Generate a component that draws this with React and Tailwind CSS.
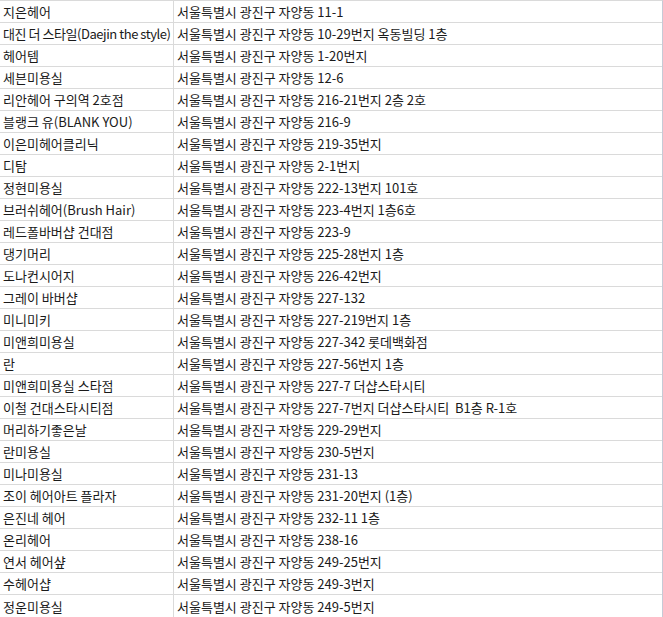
const rows = [
  ['지은헤어', '서울특별시 광진구 자양동 11-1'],
  ['대진 더 스타일(Daejin the style)', '서울특별시 광진구 자양동 10-29번지 옥동빌딩 1층'],
  ['헤어템', '서울특별시 광진구 자양동 1-20번지'],
  ['세븐미용실', '서울특별시 광진구 자양동 12-6'],
  ['리안헤어 구의역 2호점', '서울특별시 광진구 자양동 216-21번지 2층 2호'],
  ['블랭크 유(BLANK YOU)', '서울특별시 광진구 자양동 216-9'],
  ['이은미헤어클리닉', '서울특별시 광진구 자양동 219-35번지'],
  ['디탐', '서울특별시 광진구 자양동 2-1번지'],
  ['정현미용실', '서울특별시 광진구 자양동 222-13번지 101호'],
  ['브러쉬헤어(Brush Hair)', '서울특별시 광진구 자양동 223-4번지 1층6호'],
  ['레드폴바버샵 건대점', '서울특별시 광진구 자양동 223-9'],
  ['댕기머리', '서울특별시 광진구 자양동 225-28번지 1층'],
  ['도나컨시어지', '서울특별시 광진구 자양동 226-42번지'],
  ['그레이 바버샵', '서울특별시 광진구 자양동 227-132'],
  ['미니미키', '서울특별시 광진구 자양동 227-219번지 1층'],
  ['미앤희미용실', '서울특별시 광진구 자양동 227-342 롯데백화점'],
  ['란', '서울특별시 광진구 자양동 227-56번지 1층'],
  ['미앤희미용실 스타점', '서울특별시 광진구 자양동 227-7 더샵스타시티'],
  ['이철 건대스타시티점', '서울특별시 광진구 자양동 227-7번지 더샵스타시티  B1층 R-1호'],
  ['머리하기좋은날', '서울특별시 광진구 자양동 229-29번지'],
  ['란미용실', '서울특별시 광진구 자양동 230-5번지'],
  ['미나미용실', '서울특별시 광진구 자양동 231-13'],
  ['조이 헤어아트 플라자', '서울특별시 광진구 자양동 231-20번지 (1층)'],
  ['은진네 헤어', '서울특별시 광진구 자양동 232-11 1층'],
  ['온리헤어', '서울특별시 광진구 자양동 238-16'],
  ['연서 헤어샾', '서울특별시 광진구 자양동 249-25번지'],
  ['수헤어샵', '서울특별시 광진구 자양동 249-3번지'],
  ['정운미용실', '서울특별시 광진구 자양동 249-5번지'],
];

export default function App() {
  return (
    <div
      className="w-[663px] h-[617px] bg-white text-[13px] text-[#1a1a1a] overflow-hidden"
      style={{ fontFamily: '"Noto Sans CJK KR", "Noto Sans", sans-serif' }}
    >
      <div className="w-[663px] border-t border-t-[#dadada] border-r border-r-[#c6cad6] border-b border-b-[#c6cad6]">
        {rows.map(([name, addr], i) => (
          <div
            key={i}
            className={`flex h-[22px] ${i < rows.length - 1 ? 'border-b border-b-[#dadada]' : ''}`}
          >
            <div
              className={`w-[174px] shrink-0 border-r border-r-[#dadada] pl-[3px] flex items-center whitespace-nowrap overflow-hidden leading-none ${
                i === 1 ? 'tracking-[-0.45px] pl-[2px]' : ''
              }`}
            >
              {name}
            </div>
            <div className="flex-1 pl-[3px] flex items-center whitespace-pre leading-none">
              {addr}
            </div>
          </div>
        ))}
      </div>
    </div>
  );
}
